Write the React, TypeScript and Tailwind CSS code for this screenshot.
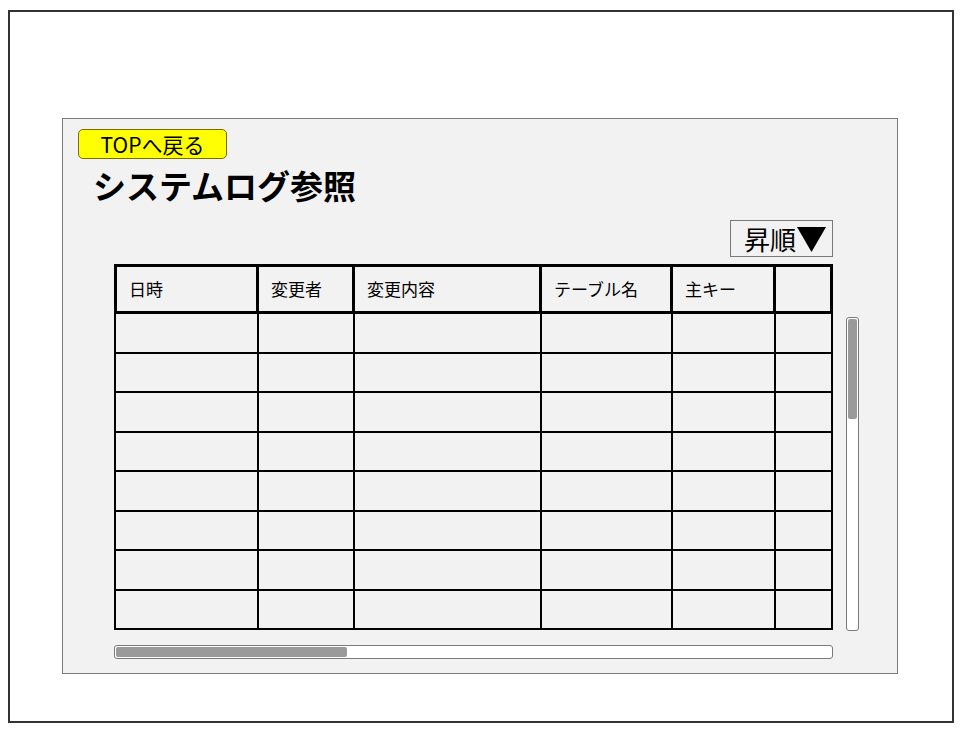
const headers = [
  { label: '日時', w: 'w-[142px]' },
  { label: '変更者', w: 'w-[96px]' },
  { label: '変更内容', w: 'w-[187px]' },
  { label: 'テーブル名', w: 'w-[131px]' },
  { label: '主キー', w: 'w-[103px]' },
  { label: '', w: 'w-[54px]' },
];

const bodyWidths = ['w-[143px]', 'w-[96px]', 'w-[187px]', 'w-[131px]', 'w-[103px]', 'w-[55px]'];

const rows = Array.from({ length: 8 }, (_, i) => i);

export default function App() {
  return (
    <div
      className="w-[965px] h-[737px] bg-white pt-[10px] pl-[8px] text-black"
      style={{ fontFamily: '"Noto Sans CJK JP", "Noto Sans", sans-serif' }}
    >
      {/* outer frame */}
      <div className="w-[946px] h-[713px] border-2 border-[#333] pt-[106px] pl-[52px]">
        {/* panel */}
        <div className="w-[836px] h-[556px] border border-[#7a7a7a] bg-[#f2f2f2] flex flex-col">
          <button className="ml-[15px] mt-[10px] w-[149px] h-[30px] rounded-[5px] border border-[#7a6d00] bg-[#ffff00] text-[21px] leading-none flex items-center justify-center">
            TOPへ戻る
          </button>

          <h1 className="ml-[30px] mt-[6px] text-[33px] font-bold leading-[40px]">システムログ参照</h1>

          <div className="self-end mr-[64px] mt-[15px] w-[103px] h-[37px] border border-[#7a7a7a] bg-[#f2f2f2] flex items-center pl-[13px] text-[26px] leading-none">
            <span>昇順</span>
            <svg width="29" height="25" viewBox="0 0 29 25" className="ml-[1px] mt-[2px]">
              <polygon points="0,0 29,0 14.5,25" fill="black" />
            </svg>
          </div>

          <div className="ml-[51px] mt-[7px] flex">
            {/* table */}
            <div className="w-[719px]">
              <div className="h-[50px] border-[3px] border-black flex">
                {headers.map((h, i) => (
                  <div
                    key={i}
                    className={`${h.w} shrink-0 h-full flex items-center pl-[12px] text-[17px] ${
                      i < headers.length - 1 ? 'border-r-[3px] border-black' : ''
                    }`}
                  >
                    {h.label}
                  </div>
                ))}
              </div>
              <div className="border-x-2 border-black">
                {rows.map((r) => (
                  <div key={r} className="h-[39.5px] border-b-2 border-black flex">
                    {bodyWidths.map((w, i) => (
                      <div
                        key={i}
                        className={`${w} shrink-0 h-full ${i < bodyWidths.length - 1 ? 'border-r-2 border-black' : ''}`}
                      />
                    ))}
                  </div>
                ))}
              </div>
            </div>

            {/* vertical scrollbar */}
            <div className="ml-[13px] mt-[53px] w-[13px] h-[314px] rounded-[3px] border border-[#7a7a7a] bg-white p-px">
              <div className="w-full h-[100px] rounded-[2px] bg-[#9a9a9a]" />
            </div>
          </div>

          {/* horizontal scrollbar */}
          <div className="ml-[51px] mt-[14px] w-[719px] h-[14px] rounded-[3px] border border-[#7a7a7a] bg-white p-px">
            <div className="w-[231px] h-full rounded-[2px] bg-[#9a9a9a]" />
          </div>
        </div>
      </div>
    </div>
  );
}
